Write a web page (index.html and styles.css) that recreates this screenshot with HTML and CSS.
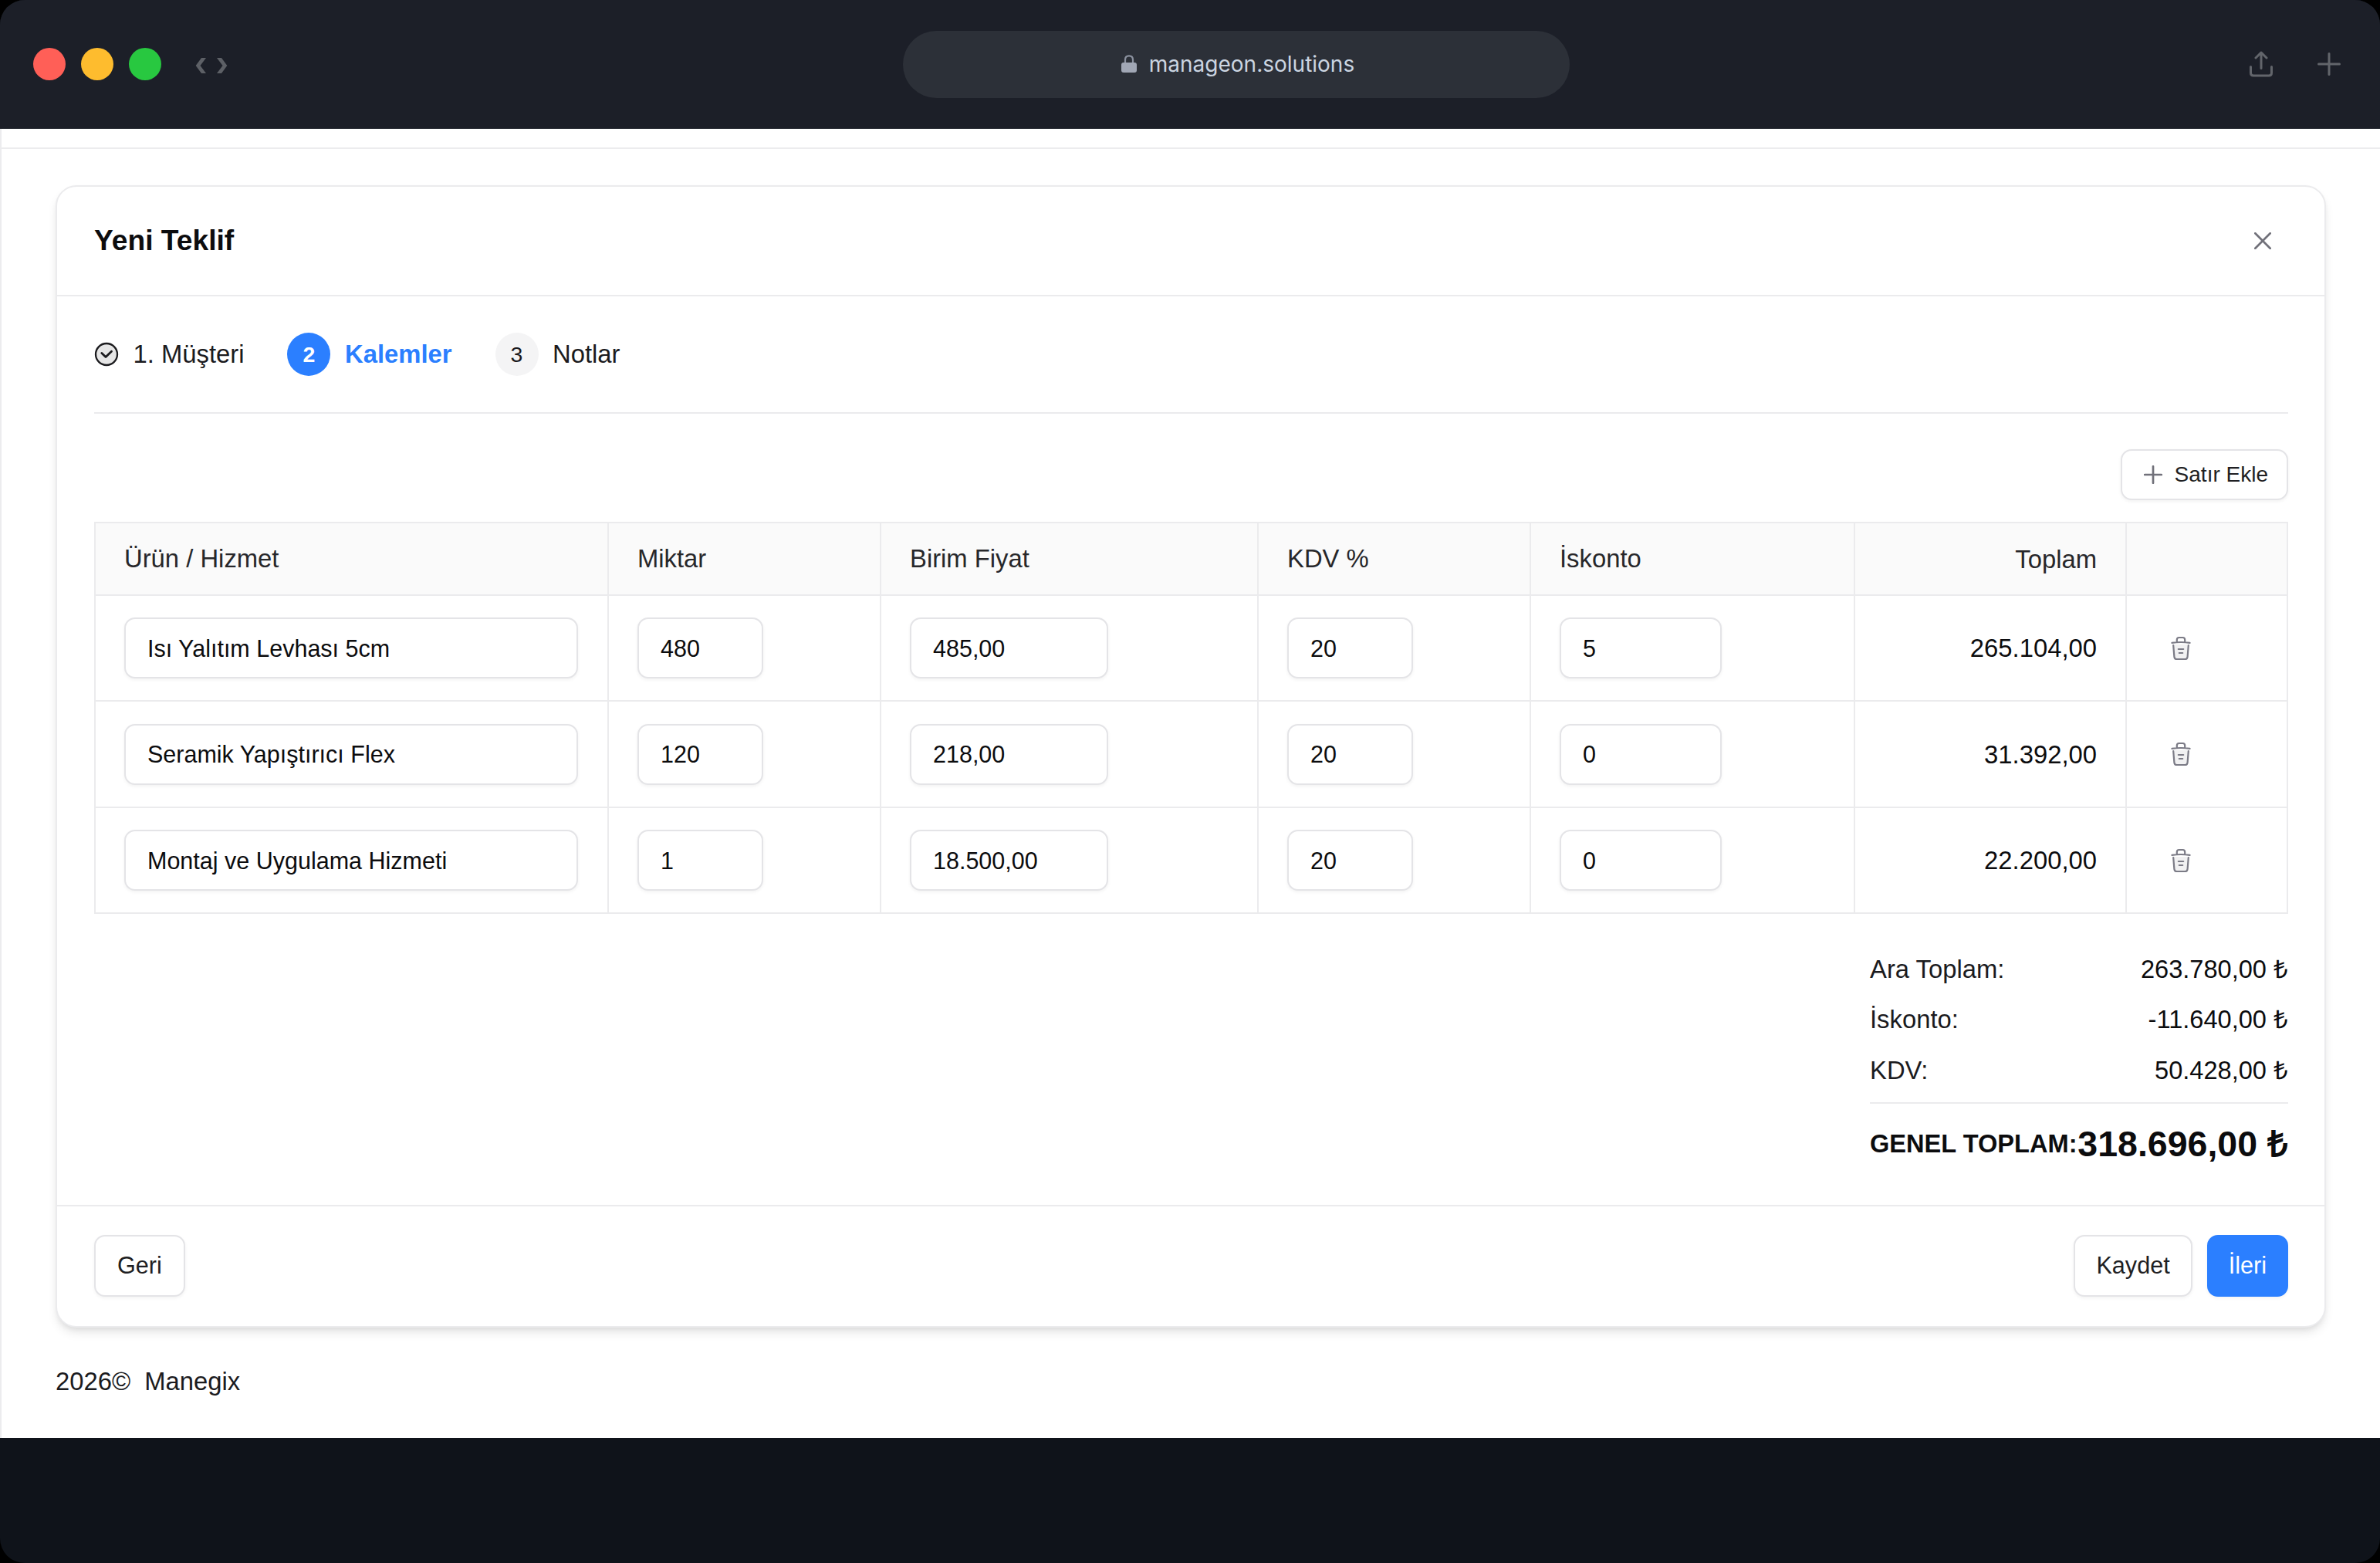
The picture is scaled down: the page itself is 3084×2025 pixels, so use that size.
FILE: index.html
```html
<!DOCTYPE html>
<html lang="tr">
<head>
<meta charset="utf-8">
<title>Yeni Teklif</title>
<link rel="stylesheet" href="styles.css">
</head>
<body>
<svg class="defs" width="0" height="0">
  <symbol id="trash" viewBox="0 0 26 32">
    <path d="M3 11 L4.3 27 Q4.6 30 7.6 30 H18.4 Q21.4 30 21.7 27 L23 11 Z" fill="#f1f1f2"/>
    <path d="M3.2 12 L4.4 26.8 Q4.7 30 7.8 30 H18.2 Q21.3 30 21.6 26.8 L22.8 12 M1.4 8.8 Q13 7.2 24.6 8.8 M7.8 7.6 V5 Q7.8 2 10.6 2 H15.4 Q18.2 2 18.2 5 V7.6 M9.8 17 H16.2 M10.8 22 H15.2" fill="none" stroke="#7b7b86" stroke-width="2.2" stroke-linecap="round"/>
  </symbol>
</svg>
<div class="window">
  <header class="titlebar">
    <div class="side">
      <div class="lights"><i class="light red"></i><i class="light yellow"></i><i class="light green"></i></div>
      <svg class="nav" width="42" height="20" viewBox="0 0 42 20"><path d="M14 0 H8 L0.7 10 L8 20 H14 L6.5 10 Z M28 0 H34 L41.3 10 L34 20 H28 L35.5 10 Z" fill="#5d6066"/></svg>
    </div>
    <div class="address">
      <svg width="20" height="24" viewBox="0 0 20 24"><path d="M5 11 V6.5 Q5 1.3 10 1.3 T15 6.5 V11" fill="none" stroke="#8b919f" stroke-width="2.2"/><rect x="0" y="10" width="20" height="13" rx="3" fill="#a1a7b5"/></svg>
      <span>manageon.solutions</span>
    </div>
    <div class="side actions">
      <svg width="30" height="34" viewBox="0 0 30 34"><path d="M1.5 20.5 V28.5 Q1.5 32 5 32 H25 Q28.5 32 28.5 28.5 V20.5 M15 22.5 V2 M8 9 L15 2 L22 9" fill="none" stroke="#62656b" stroke-width="3" stroke-linecap="round" stroke-linejoin="round"/></svg>
      <svg width="30" height="30" viewBox="0 0 30 30"><path d="M15 1.5 V28.5 M1.5 15 H28.5" stroke="#62656b" stroke-width="3" stroke-linecap="round"/></svg>
    </div>
  </header>
  <main class="page">
    <div class="strip"></div>
    <section class="card">
      <div class="card-head">
        <h1>Yeni Teklif</h1>
        <svg width="22" height="22" viewBox="0 0 22 22"><path d="M1.3 1.3 L20.7 20.7 M20.7 1.3 L1.3 20.7" stroke="#71717a" stroke-width="2.7" stroke-linecap="round"/></svg>
      </div>
      <div class="card-body">
        <nav class="steps">
          <div class="step done"><svg width="32" height="32" viewBox="0 0 32 32"><circle cx="16" cy="16" r="14" fill="#e6e6e6" stroke="#1b1b1e" stroke-width="2.3"/><path d="M9.8 14.5 L15 19.5 L22.5 12.3" fill="none" stroke="#1b1b1e" stroke-width="2.8" stroke-linecap="round" stroke-linejoin="round"/></svg><span>1. Müşteri</span></div>
          <div class="step active"><b class="num">2</b><span>Kalemler</span></div>
          <div class="step"><b class="num">3</b><span>Notlar</span></div>
        </nav>
        <div class="tools">
          <button class="btn small"><svg width="24" height="24" viewBox="0 0 24 24"><path d="M12 1.2 V22.8 M1.2 12 H22.8" stroke="#71717a" stroke-width="2.7" stroke-linecap="round"/></svg><span>Satır Ekle</span></button>
        </div>
        <div class="table">
          <div class="row head"><div>Ürün / Hizmet</div><div>Miktar</div><div>Birim Fiyat</div><div>KDV %</div><div>İskonto</div><div class="sum">Toplam</div><div></div></div>
          <div class="row"><div><span class="input full">Isı Yalıtım Levhası 5cm</span></div><div><span class="input xs">480</span></div><div><span class="input md">485,00</span></div><div><span class="input xs">20</span></div><div><span class="input sm">5</span></div><div class="sum">265.104,00</div><div class="del"><svg width="26" height="32"><use href="#trash"/></svg></div></div>
          <div class="row mid"><div><span class="input full">Seramik Yapıştırıcı Flex</span></div><div><span class="input xs">120</span></div><div><span class="input md">218,00</span></div><div><span class="input xs">20</span></div><div><span class="input sm">0</span></div><div class="sum">31.392,00</div><div class="del"><svg width="26" height="32"><use href="#trash"/></svg></div></div>
          <div class="row"><div><span class="input full">Montaj ve Uygulama Hizmeti</span></div><div><span class="input xs">1</span></div><div><span class="input md">18.500,00</span></div><div><span class="input xs">20</span></div><div><span class="input sm">0</span></div><div class="sum">22.200,00</div><div class="del"><svg width="26" height="32"><use href="#trash"/></svg></div></div>
        </div>
        <div class="totals">
          <div class="line"><span>Ara Toplam:</span><span class="val">263.780,00 ₺</span></div>
          <div class="line"><span>İskonto:</span><span class="val">-11.640,00 ₺</span></div>
          <div class="line"><span>KDV:</span><span class="val">50.428,00 ₺</span></div>
          <div class="grand"><span>GENEL TOPLAM:</span><span class="big">318.696,00 ₺</span></div>
        </div>
      </div>
      <div class="card-foot">
        <button class="btn back">Geri</button>
        <div class="group"><button class="btn">Kaydet</button><button class="btn primary">İleri</button></div>
      </div>
    </section>
    <footer class="copy"><span>2026©</span><span>Manegix</span></footer>
  </main>
</div>
</body>
</html>
```
FILE: styles.css
```css
* { box-sizing: border-box; }
body { margin: 0; background: #000; font-family: "Liberation Sans", Arial, sans-serif; font-size: 32.8px; line-height: 1; color: #1b1b1e; }
svg { display: block; flex: none; }
.defs { position: absolute; }
.window { display: flex; flex-direction: column; width: 3084px; height: 2025px; border-radius: 32px; overflow: hidden; background: #0f131a; }

.titlebar { display: flex; align-items: center; justify-content: space-between; height: 167px; padding: 0 51px 0 43px; background: #1c1f28; border-bottom: 1px solid #2b2f37; }
.side { display: flex; align-items: center; width: 1127px; }
.lights { display: flex; gap: 20px; }
.light { width: 42px; height: 42px; border-radius: 50%; }
.red { background: #ff5f57; }
.yellow { background: #febc2e; }
.green { background: #28c840; }
.nav { margin: 4px 0 0 44px; }
.actions { justify-content: flex-end; gap: 58px; width: 999px; }
.address { display: flex; align-items: center; justify-content: center; gap: 16px; width: 864px; height: 87px; padding-left: 4px; border-radius: 44px; background: #2c3038; color: #cbd5e1; font-family: Inter, sans-serif; font-size: 28px; }

.page { height: 1696px; background: #fff; border-left: 2px solid #ececee; }
.strip { height: 26px; border-bottom: 2px solid #ececee; }
.card { display: flex; flex-direction: column; width: 2942px; height: 1480px; margin: 47px 0 0 70px; border: 2px solid #ebebed; border-radius: 27px; background: #fff; box-shadow: 0 8px 13px -2px rgba(0,0,0,.1), 0 4px 8px -4px rgba(0,0,0,.1); }
.card-head { display: flex; align-items: center; justify-content: space-between; height: 142px; padding: 0 69px 0 48px; border-bottom: 2px solid #ebebed; }
h1 { margin: 0; font-size: 37.2px; font-weight: 700; color: #0c0c0e; }
.card-body { flex: 1; display: flex; flex-direction: column; padding: 0 47px 0 48px; }

.steps { display: flex; align-items: center; gap: 56px; height: 152px; border-bottom: 2px solid #ebebed; }
.step { display: flex; align-items: center; gap: 18.5px; }
.step span { padding-top: 1px; }
.num { display: flex; align-items: center; justify-content: center; width: 56px; height: 56px; border-radius: 50%; background: #f4f4f5; font-size: 28.5px; font-weight: 400; }
.active { color: #2b7fff; font-weight: 700; }
.active .num { background: #2b7fff; color: #fff; font-weight: 700; }

.tools { display: flex; justify-content: flex-end; height: 140px; padding-top: 46px; }
.btn { display: flex; align-items: center; height: 80px; padding: 0 27px; border: 2px solid #e4e4e7; border-radius: 14px; background: #fff; box-shadow: 0 2px 4px rgba(0,0,0,.05); color: #1f1f23; font: 30.6px/1 "Liberation Sans", Arial, sans-serif; }
.btn.small { gap: 16px; height: 66px; padding: 0 24px 0 28px; font-size: 28px; }
.btn.back { padding: 0 28px; }
.btn.primary { padding: 0 26px; border-color: #2b7fff; background: #2b7fff; color: #fff; }

.table { border: 2px solid #ebebed; }
.row { display: grid; grid-template-columns: 665px 353px 489px 353px 420px 352px 1fr; height: 137px; border-top: 2px solid #ebebed; color: #0c0c0e; }
.row.mid { height: 138px; }
.row > div { display: flex; align-items: center; padding: 0 37px; border-right: 2px solid #ebebed; }
.row > div:last-child { border-right: 0; }
.head { height: 92px; border-top: 0; background: #fafafa; color: #27272a; }
.head > div { padding-top: 1px; }
.row > .sum { justify-content: flex-end; padding: 2px 37px 0 0; }
.row > .del { padding-left: 57px; }
.input { display: flex; align-items: center; height: 79px; padding: 1px 27px 0 28px; border: 2px solid #e4e4e7; border-radius: 14px; background: #fff; box-shadow: 0 2px 4px rgba(0,0,0,.05); font-size: 30.5px; white-space: nowrap; }
.full { width: 588px; }
.xs { width: 163px; }
.md { width: 257px; }
.sm { width: 210px; }

.totals { align-self: flex-end; width: 542px; margin-top: 39px; }
.line { display: flex; align-items: center; justify-content: space-between; height: 65.5px; padding-top: 1px; }
.val, .big { color: #0c0c0e; }
.val { font-size: 32.6px; }
.grand { display: flex; align-items: center; justify-content: space-between; height: 106px; margin-top: 8px; padding-top: 2px; border-top: 2px solid #ebebed; font-size: 32.6px; font-weight: 700; color: #0c0c0e; white-space: nowrap; }
.big { font-size: 46.5px; }

.card-foot { display: flex; align-items: center; justify-content: space-between; height: 157px; padding: 0 47px 2px 48px; border-top: 2px solid #ebebed; }
.group { display: flex; gap: 19px; }
.copy { display: flex; gap: 18px; padding: 54px 0 0 70px; }
```
